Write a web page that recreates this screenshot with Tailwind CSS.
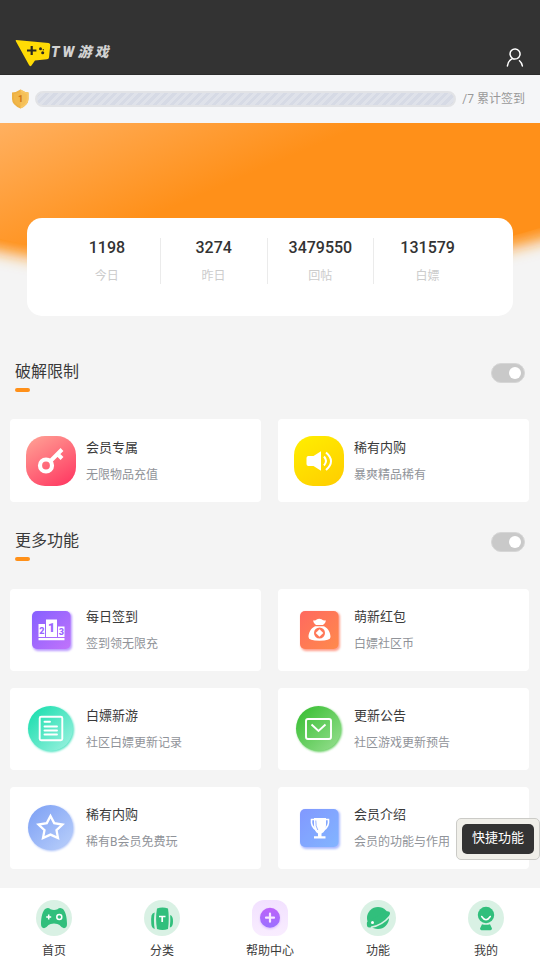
<!DOCTYPE html>
<html lang="zh-CN">
<head>
<meta charset="utf-8">
<meta name="viewport" content="width=device-width, initial-scale=1">
<title>TW游戏</title>
<script src="https://cdn.jsdelivr.net/npm/@tailwindcss/browser@4"></script>
</head>
<body class="min-h-screen bg-[#f4f4f4] pb-[91px] font-[Roboto,'Noto_Sans_CJK_SC',sans-serif] text-[#3a3a3a]">

<header class="flex h-[75px] items-end justify-between border-b border-[#2b2b2b] bg-[#333] pr-4 pl-[15px]">
  <a href="#" class="mb-[7px] flex items-center" aria-label="TW游戏">
    <svg class="h-[30px] w-9" viewBox="0 0 36 30">
      <path d="M1 3 33.500 6Q35.500 6.300 35.300 8L34 20.500Q33.800 22.200 32 22.300L20 23.500 16.500 28.500Q15 30 14 28L1 4.500Q.3 3.200 1 3Z" fill="#ffdb05"/>
      <path d="M16.700 9v9M12 13.500h9.400" stroke="#2b2920" stroke-width="2.200" fill="none"/>
      <g fill="#2b2920"><circle cx="25.500" cy="11.800" r="1.500"/><circle cx="28.300" cy="12.800" r=".7"/><circle cx="27.700" cy="15.800" r="1.500"/></g>
    </svg>
    <span class="flex gap-[3px] text-sm leading-5 font-black text-[#d2d2d2] italic"><span>T</span><span>W</span><span>游</span><span>戏</span></span>
  </a>
  <button type="button" class="mb-[6px]" aria-label="个人中心">
    <svg class="h-5 w-[18px]" viewBox="0 0 18 20" fill="none" stroke="#fff" stroke-width="1.500" stroke-linecap="round"><path d="M6.500 10.300A5 5 0 1 1 11 10.600Q8 11.500 6.500 10.300C3.500 12 1.600 14.500 1.400 18M13.500 12.700Q16.200 15 16.400 18"/></svg>
  </button>
</header>

<section class="flex h-12 items-center bg-[#f5f6f8] pr-[15px] pl-[11px]">
  <svg class="h-5 w-[18px] shrink-0" viewBox="0 0 18 20">
    <path d="M9.500 .5Q13 3 17.500 3.500V10Q17.500 16 9.500 19.500Q1 16 1 10V3.500Q6 3 9.500 .5Z" fill="#edb143"/>
    <path d="M9.500 .5Q13 3 17.500 3.500V10Q17.500 16 9.500 19.500Z" fill="#f8c765"/>
    <path d="M9.500 2.500Q12.500 4.500 15.700 4.900V10Q15.700 14.700 9.500 17.500Q3 14.700 3 10V4.900Q6.500 4.500 9.500 2.500Z" fill="#f4bb50" opacity=".6"/>
    <text x="9.500" y="13" text-anchor="middle" font-family="Roboto" font-size="9" font-weight="700" fill="#cf7412">1</text>
  </svg>
  <div role="progressbar" aria-label="累计签到" aria-valuenow="0" aria-valuemin="0" aria-valuemax="7" class="ml-[6px] h-4 flex-1 rounded-full border-2 border-[#e2e3e6] bg-[repeating-linear-gradient(135deg,#d6dae5_0px,#d6dae5_3px,#dfe2ea_3px,#dfe2ea_6px)]"></div>
  <span class="ml-[6px] text-xs text-[#999]">/7 累计签到</span>
</section>

<section class="relative px-[27px] pt-[95px]">
  <svg class="absolute top-0 left-0 h-[190px] w-full" viewBox="0 0 540 190" preserveAspectRatio="none" aria-hidden="true">
    <defs>
      <linearGradient id="sun" gradientUnits="userSpaceOnUse" x1="0" y1="0" x2="58" y2="134"><stop stop-color="#ffb060"/><stop offset="1" stop-color="#ff9019"/></linearGradient>
      <filter id="glow" x="-20%" y="-20%" width="140%" height="140%"><feGaussianBlur stdDeviation="8"/></filter>
    </defs>
    <path d="M-60 20H600V91Q280 193-60 105Z" transform="translate(0 9)" fill="#ff9019" filter="url(#glow)"/>
    <path d="M0 0H540V105Q280 183 0 116Z" fill="url(#sun)"/>
  </svg>
  <div class="relative rounded-[15px] bg-white pt-5 pr-8 pb-8 pl-[27px]">
    <dl class="grid grid-cols-4 divide-x divide-[#ebebeb] text-center">
      <div class="flex h-[46px] flex-col-reverse justify-between"><dt class="text-xs leading-4 text-[#ccc]">今日</dt><dd class="text-base leading-5 font-medium text-[#333]">1198</dd></div>
      <div class="flex h-[46px] flex-col-reverse justify-between"><dt class="text-xs leading-4 text-[#ccc]">昨日</dt><dd class="text-base leading-5 font-medium text-[#333]">3274</dd></div>
      <div class="flex h-[46px] flex-col-reverse justify-between"><dt class="text-xs leading-4 text-[#ccc]">回帖</dt><dd class="text-base leading-5 font-medium text-[#333]">3479550</dd></div>
      <div class="flex h-[46px] flex-col-reverse justify-between"><dt class="text-xs leading-4 text-[#ccc]">白嫖</dt><dd class="text-base leading-5 font-medium text-[#333]">131579</dd></div>
    </dl>
  </div>
</section>

<main class="pt-4">
  <section>
    <div class="flex items-start justify-between pt-7 pr-[15px] pb-[27px] pl-[15px]">
      <h2 id="limits" class="text-base leading-6 after:mt-1 after:block after:h-1 after:w-[15px] after:rounded-[2px] after:bg-[#ff9019] after:content-['']">破解限制</h2>
      <input type="checkbox" role="switch" checked aria-labelledby="limits" class="mt-[3px] h-5 w-[34px] appearance-none rounded-full border border-[#d6d6d6] bg-[#c9c9c9] pt-[3px] pl-[17px] before:block before:size-3 before:rounded-full before:bg-white before:content-['']">
    </div>
    <div class="grid grid-cols-2 gap-[17px] pr-[11px] pl-[10px]">
      <a href="#" class="flex h-[83px] items-center gap-[10px] rounded bg-white pl-4">
        <svg class="size-[50px] shrink-0" viewBox="0 0 50 50">
          <defs><linearGradient id="pink" x1=".2" y1="0" x2=".8" y2="1"><stop stop-color="#ff9c92"/><stop offset="1" stop-color="#ff3b63"/></linearGradient></defs>
          <rect width="50" height="50" rx="19" fill="url(#pink)"/>
          <circle cx="20" cy="29.500" r="6" fill="none" stroke="#fff" stroke-width="4.200"/>
          <path d="M24.500 25 36 13.500M31.500 18l4.500 4.500" fill="none" stroke="#fff" stroke-width="4"/>
        </svg>
        <span class="flex flex-col gap-[7px] pt-px whitespace-nowrap"><span class="text-[13px] leading-5">会员专属</span><span class="text-xs leading-5 text-[#909399]">无限物品充值</span></span>
      </a>
      <a href="#" class="flex h-[83px] items-center gap-[10px] rounded bg-white pl-4">
        <svg class="size-[50px] shrink-0" viewBox="0 0 50 50">
          <defs><linearGradient id="yellow" x1=".2" y1="0" x2=".8" y2="1"><stop stop-color="#ffec00"/><stop offset="1" stop-color="#ffcf00"/></linearGradient></defs>
          <rect width="50" height="50" rx="19" fill="url(#yellow)"/>
          <path d="M14 20h5.500L27 15.200v19.600L19.500 30H14a2 2 0 0 1-1.500-2v-6a2 2 0 0 1 1.500-2Z" fill="#fff"/>
          <path d="M30 20.500q4 4.500 0 9M32 16.500q10 8.500 0 17.500" fill="none" stroke="#fff" stroke-width="2"/>
        </svg>
        <span class="flex flex-col gap-[7px] pt-px whitespace-nowrap"><span class="text-[13px] leading-5">稀有内购</span><span class="text-xs leading-5 text-[#909399]">暴爽精品稀有</span></span>
      </a>
    </div>
  </section>

  <section>
    <div class="flex items-start justify-between pt-[27px] pr-[15px] pb-7 pl-[15px]">
      <h2 id="more" class="text-base leading-6 after:mt-1 after:block after:h-1 after:w-[15px] after:rounded-[2px] after:bg-[#ff9019] after:content-['']">更多功能</h2>
      <input type="checkbox" role="switch" checked aria-labelledby="more" class="mt-[3px] h-5 w-[34px] appearance-none rounded-full border border-[#d6d6d6] bg-[#c9c9c9] pt-[3px] pl-[17px] before:block before:size-3 before:rounded-full before:bg-white before:content-['']">
    </div>
    <div class="grid grid-cols-2 gap-[17px] pr-[11px] pl-[10px]">
      <a href="#" class="flex h-[82px] items-center gap-[10px] rounded bg-white pl-4">
        <svg class="size-[50px] shrink-0" viewBox="0 0 50 50">
          <defs><linearGradient id="purple" x1="0" y1="0" x2="1" y2="1"><stop stop-color="#8660ff"/><stop offset="1" stop-color="#c173fb"/></linearGradient><filter id="soft" x="-20%" y="-20%" width="140%" height="140%"><feGaussianBlur stdDeviation="1.200"/></filter></defs>
          <rect x="7" y="7" width="39" height="39" rx="5" fill="#b999ff" filter="url(#soft)"/>
          <rect x="6" y="6" width="38.500" height="38" rx="5" fill="url(#purple)"/>
          <path d="M12.500 19h6.500v13h-6.500zM20 14.500h11V32H20zM32 21.500h6.500V32H32zM12.500 33h26v2.200h-26z" fill="#fff"/>
          <g fill="#9a65ff" font-family="Roboto" font-weight="900" text-anchor="middle"><text x="15.800" y="28.500" font-size="9">2</text><text x="25.500" y="27" font-size="12">1</text><text x="35.300" y="30.300" font-size="9">3</text></g>
        </svg>
        <span class="flex flex-col gap-[7px] whitespace-nowrap"><span class="text-[13px] leading-5">每日签到</span><span class="text-xs leading-5 text-[#909399]">签到领无限充</span></span>
      </a>
      <a href="#" class="flex h-[82px] items-center gap-[10px] rounded bg-white pl-4">
        <svg class="size-[50px] shrink-0" viewBox="0 0 50 50">
          <defs><linearGradient id="coral" x1="0" y1="0" x2="1" y2="1"><stop stop-color="#ff695f"/><stop offset="1" stop-color="#ff8a4c"/></linearGradient></defs>
          <rect x="7" y="7" width="39" height="39" rx="5" fill="#ff9d8a" filter="url(#soft)"/>
          <rect x="6" y="6" width="38.500" height="38" rx="5" fill="url(#coral)"/>
          <path d="M19 15.500Q21.500 16 23 14.300Q25 13.200 27.500 14.300Q29.500 16 32 15.500Q31.500 18.500 29 20H22Q19.500 18.500 19 15.500ZM21 21.300H30C34.500 23.500 36.500 28 36.500 32Q36.500 35.800 25.500 35.800T14.500 32C14.500 28 16.500 23.500 21 21.300Z" fill="#fff"/>
          <circle cx="25.500" cy="28" r="5.500" fill="#ff7757"/><path d="m25.500 24.200 3.800 3.800-3.800 3.800-3.800-3.800Z" fill="#fff"/>
        </svg>
        <span class="flex flex-col gap-[7px] whitespace-nowrap"><span class="text-[13px] leading-5">萌新红包</span><span class="text-xs leading-5 text-[#909399]">白嫖社区币</span></span>
      </a>
      <a href="#" class="flex h-[82px] items-center gap-[10px] rounded bg-white pl-4">
        <svg class="size-[50px] shrink-0" viewBox="0 0 50 50">
          <defs><linearGradient id="mint" x1=".1" y1=".1" x2=".9" y2=".9"><stop stop-color="#1fdfb0"/><stop offset="1" stop-color="#93f0dc"/></linearGradient></defs>
          <circle cx="25.500" cy="25.500" r="22.500" fill="#4ce3c0" filter="url(#soft)"/>
          <circle cx="24.500" cy="24.500" r="22.500" fill="url(#mint)"/>
          <rect x="13.700" y="12.700" width="22.600" height="23.600" rx="1.500" fill="none" stroke="#fff" stroke-width="1.900"/>
          <path d="M18.500 17.800h5.500M18.500 22.500h12.500M18.500 26.500h12.500M18.500 30.500h12.500" stroke="#fff" stroke-width="1.900" stroke-linecap="round"/>
        </svg>
        <span class="flex flex-col gap-[7px] whitespace-nowrap"><span class="text-[13px] leading-5">白嫖新游</span><span class="text-xs leading-5 text-[#909399]">社区白嫖更新记录</span></span>
      </a>
      <a href="#" class="flex h-[82px] items-center gap-[10px] rounded bg-white pl-4">
        <svg class="size-[50px] shrink-0" viewBox="0 0 50 50">
          <defs><linearGradient id="green" x1=".1" y1=".1" x2=".9" y2=".9"><stop stop-color="#3cc037"/><stop offset="1" stop-color="#8fdc88"/></linearGradient></defs>
          <circle cx="25.500" cy="25.500" r="22.500" fill="#62ce5d" filter="url(#soft)"/>
          <circle cx="24.500" cy="24.500" r="22.500" fill="url(#green)"/>
          <rect x="12" y="15" width="25" height="20" rx="2" fill="none" stroke="#fff" stroke-width="1.900"/>
          <path d="m17.500 20.500 7 6.500 7-6.500" fill="none" stroke="#fff" stroke-width="1.900"/>
        </svg>
        <span class="flex flex-col gap-[7px] whitespace-nowrap"><span class="text-[13px] leading-5">更新公告</span><span class="text-xs leading-5 text-[#909399]">社区游戏更新预告</span></span>
      </a>
      <a href="#" class="flex h-[82px] items-center gap-[10px] rounded bg-white pl-4">
        <svg class="size-[50px] shrink-0" viewBox="0 0 50 50">
          <defs><linearGradient id="blue" x1=".1" y1=".1" x2=".9" y2=".9"><stop stop-color="#82a4f5"/><stop offset="1" stop-color="#b4cbfa"/></linearGradient></defs>
          <circle cx="25.500" cy="25.500" r="22.500" fill="#a5bdf8" filter="url(#soft)"/>
          <circle cx="24.500" cy="24.500" r="22.500" fill="url(#blue)"/>
          <path d="m24.500 13 3.700 7.100 8.300 1.400-6 5.600 1.500 8-7.500-3.500-7.500 3.500 1.500-8-6-5.600 8.300-1.400Z" fill="none" stroke="#fff" stroke-width="2.300"/>
        </svg>
        <span class="flex flex-col gap-[7px] whitespace-nowrap"><span class="text-[13px] leading-5">稀有内购</span><span class="text-xs leading-5 text-[#909399]">稀有B会员免费玩</span></span>
      </a>
      <a href="#" class="flex h-[82px] items-center gap-[10px] rounded bg-white pl-4">
        <svg class="size-[50px] shrink-0" viewBox="0 0 50 50">
          <defs><linearGradient id="sky" x1="0" y1="0" x2="1" y2="1"><stop stop-color="#8198ff"/><stop offset="1" stop-color="#83b5ff"/></linearGradient></defs>
          <rect x="7" y="7" width="39" height="39" rx="5" fill="#abb9ff" filter="url(#soft)"/>
          <rect x="6" y="6" width="38.500" height="38" rx="5" fill="url(#sky)"/>
          <path d="M20 15h12v7q0 6.500-4.500 8.500v2.800h4V35.500H20v-2.200h4v-2.800Q20 28.500 20 22Z" fill="#fff"/>
          <path d="M20.500 16.500H17.500q-.8 7.500 5 10.500M31.500 16.500h3q.8 7.500-5 10.500" fill="none" stroke="#fff" stroke-width="1.600"/>
          <path d="M21.800 17.500q-.3 6 2 9.500" fill="none" stroke="#8ba8ff" stroke-width=".9"/>
        </svg>
        <span class="flex flex-col gap-[7px] whitespace-nowrap"><span class="text-[13px] leading-5">会员介绍</span><span class="text-xs leading-5 text-[#909399]">会员的功能与作用</span></span>
      </a>
    </div>
  </section>
</main>

<div class="fixed right-0 bottom-[100px] rounded-[5px] border border-[#cbcbc7] bg-[#f0efe9] p-[5px]">
  <button type="button" class="block h-[30px] rounded-[5px] bg-[#333] px-[10px] pb-[3px] text-[13px] leading-5 text-white">快捷功能</button>
</div>

<nav class="fixed inset-x-0 bottom-0 grid h-[72px] grid-cols-5 bg-white pt-3 text-xs" aria-label="主导航">
  <a href="#" class="flex flex-col items-center gap-[7px]">
    <svg class="size-9" viewBox="0 0 36 36"><circle cx="18" cy="18" r="18" fill="#d9f1e4"/><path d="M10 8.500q2.500-1.200 4.500.8 3.500 1.200 7 0 2-2 4.500-.8C29.500 10 31 18 31 24q0 4-3 4.200-2 0-4.500-3.200-1.500-1.500-5.500-1.500T12.500 25Q10 28.200 8 28.200 5 28 5 24C5 18 6.500 10 10 8.500Z" fill="#31bf7c"/><path d="M12.700 14.500v5M10.200 17h5" stroke="#fff" stroke-width="1.500"/><circle cx="23.300" cy="17" r="2.500" fill="none" stroke="#fff" stroke-width="1.500"/></svg>
    <span class="leading-4">首页</span>
  </a>
  <a href="#" class="flex flex-col items-center gap-[7px]">
    <svg class="size-9" viewBox="0 0 36 36"><circle cx="18" cy="18" r="18" fill="#d9f1e4"/><path d="M13 8.500q5.500-2 11 0 1.500 9.500 0 20.500-5.500 2-11 0-1.800-10.500 0-20.500ZM10.700 12.500q-1.500 7.500 0 16.500-3.200-1-3.400-5-.5-5 .2-8.500.7-2.500 3.200-3ZM26.200 15q3 1 2.800 6.500 0 5.500-3.200 6 .8-6 .4-12.500Z" fill="#31bf7c"/><path d="M15 16.500h6.500M18.200 16.500V22" stroke="#fff" stroke-width="1.700"/></svg>
    <span class="leading-4">分类</span>
  </a>
  <a href="#" class="flex flex-col items-center gap-[7px]">
    <svg class="size-9" viewBox="0 0 36 36"><defs><linearGradient id="lilac" x1="0" y1="0" x2="0" y2="1"><stop stop-color="#f2e1ff"/><stop offset="1" stop-color="#f9edff"/></linearGradient><linearGradient id="violet" x1="0" y1="0" x2="0" y2="1"><stop stop-color="#bd62fa"/><stop offset="1" stop-color="#9a70ff"/></linearGradient></defs><rect width="36" height="36" rx="12" fill="url(#lilac)"/><circle cx="18" cy="19" r="10" fill="#dcbcff" filter="url(#soft)"/><circle cx="18" cy="17.700" r="10" fill="url(#violet)"/><path d="M18 13.700v8M14 17.700h8" stroke="#f8e8ff" stroke-width="2.200" stroke-linecap="round"/></svg>
    <span class="leading-4">帮助中心</span>
  </a>
  <a href="#" class="flex flex-col items-center gap-[7px]">
    <svg class="size-9" viewBox="0 0 36 36"><circle cx="18" cy="18" r="18" fill="#d9f1e4"/><circle cx="18" cy="18" r="11" fill="#31bf7c"/><path d="M25 11.500q5-1 5 1.500c0 5-11.500 13.500-20.500 14.500q-3.500 0-2.500-5.500Z" fill="#31bf7c"/><path d="M11 27.300Q22 25.500 30 16" fill="none" stroke="#d9f1e4" stroke-width="1.600"/><circle cx="12.500" cy="22.500" r="1.500" fill="#fff"/></svg>
    <span class="leading-4">功能</span>
  </a>
  <a href="#" class="flex flex-col items-center gap-[7px]">
    <svg class="size-9" viewBox="0 0 36 36"><circle cx="18" cy="18" r="18" fill="#d9f1e4"/><circle cx="18" cy="15" r="8.200" fill="#31bf7c"/><path d="M13.700 16.500q4.300 6.500 8.600 0" fill="none" stroke="#fff" stroke-width="1.500" stroke-linecap="round"/><path d="M14 24.200q4 1.300 8 0l2 4.300q-.2 1.700-1.500 1.700h-9q-1.300 0-1.500-1.700Z" fill="#31bf7c"/></svg>
    <span class="leading-4">我的</span>
  </a>
</nav>
</body>
</html>
